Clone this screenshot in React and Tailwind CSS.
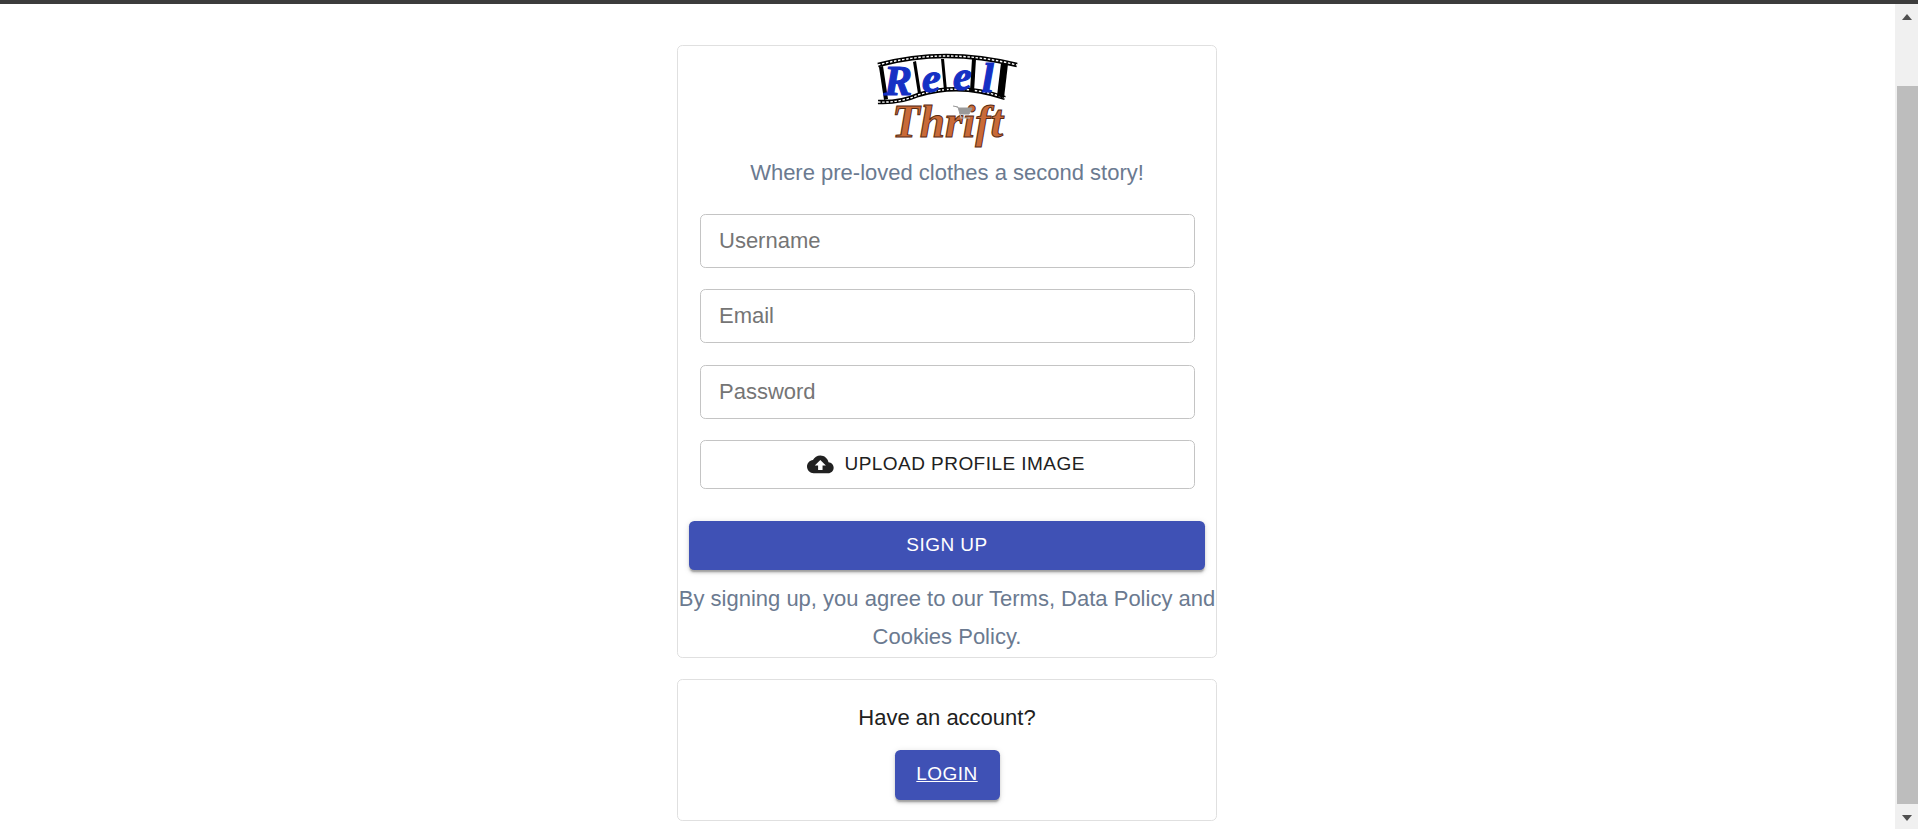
import React from 'react';

const elevation = 'shadow-[0_2.67px_1.33px_-1.33px_rgba(0,0,0,0.2),0_2.67px_2.67px_0_rgba(0,0,0,0.14),0_1.33px_6.67px_0_rgba(0,0,0,0.12)]';

function Logo() {
  const dividers = [
    'M9 17 L14 50 L18 49 L13 16 Z',
    'M43 12 L48 44 L51 43 L46 11 Z',
    'M71 9 L74 41 L77 41 L74 9 Z',
    'M102 9 L100 41 L104 42 L106 9 Z',
    'M131 13 L127 46 L134 48 L138 14 Z',
  ];
  return (
    <svg width="154" height="100" viewBox="0 0 154 100" className="block overflow-visible">
      {/* film strip */}
      <path d="M8 15 Q75 -3 147 15" fill="none" stroke="#000" strokeWidth="4.5" />
      <path d="M8 15 Q75 -3 147 15" fill="none" stroke="#fff" strokeWidth="1.4" strokeDasharray="2.5 1.6" />
      <path d="M8 52 Q30 53 48 45 Q90 32 135 48" fill="none" stroke="#000" strokeWidth="4.5" />
      <path d="M8 52 Q30 53 48 45 Q90 32 135 48" fill="none" stroke="#fff" strokeWidth="1.4" strokeDasharray="2.5 1.6" />
      {dividers.map((d) => (
        <path key={d} d={d} fill="#000" />
      ))}
      {/* Reel */}
      <text
        x="14 52 83 112"
        y="45 42 40 42"
        fontFamily="'Liberation Serif', serif"
        fontStyle="italic"
        fontWeight="700"
        fontSize="42"
        fill="#1530c4"
        stroke="#1530c4"
        strokeWidth="1.2"
      >
        Reel
      </text>
      {/* Thrift */}
      <text
        x="22"
        y="87"
        textLength="111"
        lengthAdjust="spacingAndGlyphs"
        fontFamily="'Liberation Serif', serif"
        fontStyle="italic"
        fontWeight="700"
        fontSize="46"
        fill="#c96a38"
        stroke="#5a2a12"
        strokeWidth="1"
      >
        Thrift
      </text>
      {/* cart */}
      <path d="M83 56 L88 57 L90 64 L99 64 L102 58 L89 58" fill="#9a9a9a" stroke="#9a9a9a" strokeWidth="1" />
      <path d="M90 64 L91 68 L100 68" fill="none" stroke="#b5b5b5" strokeWidth="1.2" />
    </svg>
  );
}

function Field({ placeholder, type = 'text' }) {
  return (
    <input
      type={type}
      placeholder={placeholder}
      className="block w-[495px] h-[54px] shrink-0 mt-[21.5px] first:mt-0 px-[18.5px] border border-[#c4c4c4] rounded-[5.33px] bg-white text-[22px] text-[#212121] placeholder:text-[#757575] outline-none"
    />
  );
}

export default function App() {
  return (
    <div className="h-screen flex flex-col overflow-hidden bg-white font-['Liberation_Sans',Arial,sans-serif]">
      <div className="h-1 shrink-0 bg-[#3c3c3c]" />
      <div className="flex flex-1 min-h-0">
        <main className="flex-1 flex flex-col items-center pt-[41px] pr-[1px]">
          <section className="w-[540px] h-[613px] flex flex-col items-center border border-[#e0e0e0] rounded-[5.33px] pt-1">
            <Logo />
            <p className="mt-[4px] text-[22px] leading-[38.5px] text-[#6b7a90]">Where pre-loved clothes a second story!</p>
            <form className="mt-[21px] flex flex-col items-center">
              <Field placeholder="Username" />
              <Field placeholder="Email" type="email" />
              <Field placeholder="Password" type="password" />
              <button
                type="button"
                className="mt-[21px] w-[495px] h-[49px] flex items-center justify-center gap-[10.67px] border border-[#c4c4c4] rounded-[5.33px] text-[19px] tracking-[0.45px] text-[#212121]"
              >
                <svg width="26.67" height="26.67" viewBox="0 0 24 24" fill="#212121" className="-ml-[2px]">
                  <path d="M19.35 10.04C18.67 6.59 15.64 4 12 4 9.11 4 6.64 5.64 5.35 8.04 2.34 8.36 0 10.91 0 14c0 3.31 2.69 6 6 6h13c2.76 0 5-2.24 5-5 0-2.64-2.05-4.78-4.65-4.96zM14 13v4h-4v-4H7l5-5 5 5h-3z" />
                </svg>
                UPLOAD PROFILE IMAGE
              </button>
              <button
                type="button"
                className={`mt-[32px] w-[516.5px] h-[49px] rounded-[5.33px] bg-[#3f51b5] text-white text-[19px] tracking-[0.45px] ${elevation}`}
              >
                SIGN UP
              </button>
            </form>
            <p className="mt-[10.5px] w-[540px] text-center text-[22px] leading-[38px] text-[#6b7a90]">
              By signing up, you agree to our Terms, Data Policy and Cookies Policy.
            </p>
          </section>

          <section className="mt-[21px] w-[540px] h-[142px] flex flex-col items-center border border-[#e0e0e0] rounded-[5.33px] pt-[19px]">
            <p className="text-[22px] leading-[38px] text-[#212121]">Have an account?</p>
            <a
              href="#login"
              className={`mt-[12.5px] w-[105px] h-[50px] flex items-center justify-center rounded-[5.33px] bg-[#3f51b5] text-white text-[19px] tracking-[0.45px] underline ${elevation}`}
            >
              LOGIN
            </a>
          </section>
        </main>

        {/* scrollbar */}
        <aside className="w-[23px] shrink-0 flex flex-col bg-[#f0f0f0]">
          <div className="h-[82px] shrink-0 pt-[10px] pl-[7px]">
            <div className="w-0 h-0 border-x-[5.5px] border-x-transparent border-b-[6px] border-b-[#505050]" />
          </div>
          <div className="flex-1 ml-[2px] bg-[#bdbdbd]" />
          <div className="h-[25px] shrink-0 pt-[11px] pl-[7px]">
            <div className="w-0 h-0 border-x-[5.5px] border-x-transparent border-t-[6px] border-t-[#505050]" />
          </div>
        </aside>
      </div>
    </div>
  );
}
